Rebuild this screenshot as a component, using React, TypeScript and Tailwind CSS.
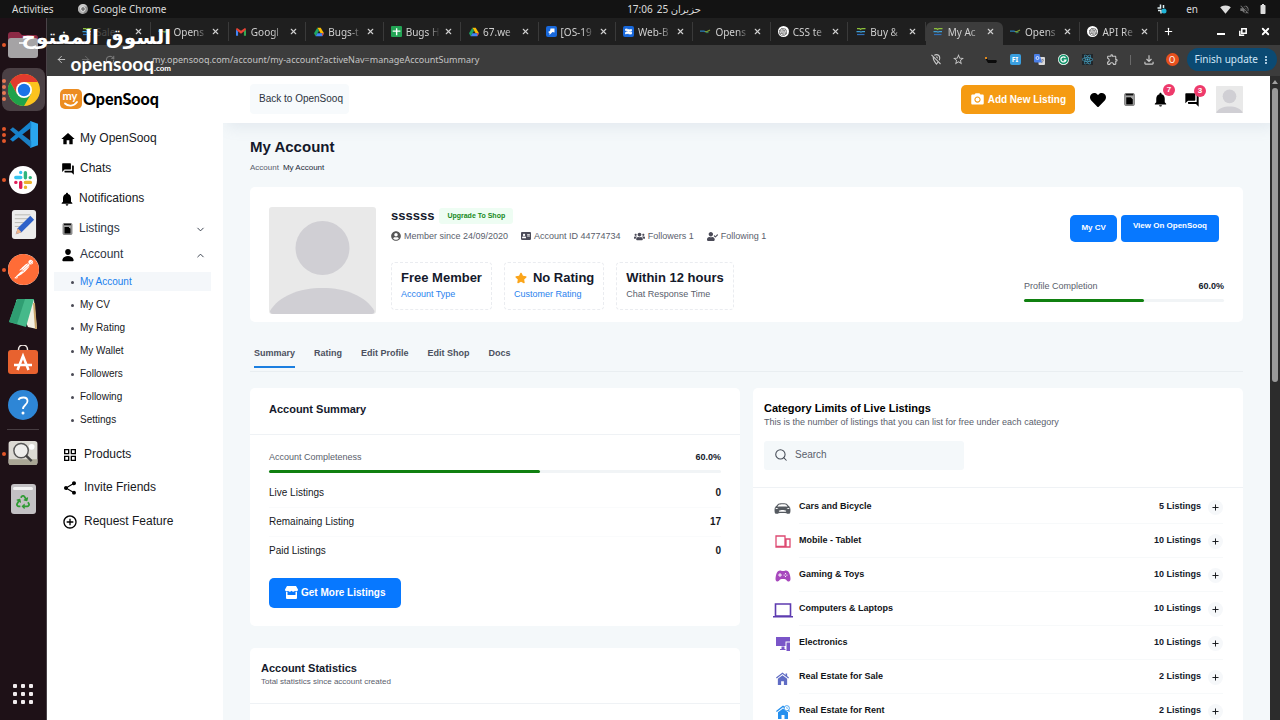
import type { ReactNode } from "react";
import {
  MdHome,
  MdForum,
  MdNotifications,
  MdGridView,
  MdShare,
  MdAddCircleOutline,
  MdOutlineFileDownload,
  MdOutlineLocationOff,
  MdStarBorder,
  MdOutlineExtension,
  MdSignalWifi4Bar,
  MdVolumeOff,
  MdBatteryFull,
  MdCameraAlt,
  MdMoreVert,
} from "react-icons/md";
import { FaStar, FaUsers, FaUserCheck, FaAddressCard, FaHeart, FaUserCircle, FaReact, FaRecycle } from "react-icons/fa";
import { SiPostman, SiOpenai } from "react-icons/si";
import { IoPerson, IoCarSport, IoGameController } from "react-icons/io5";
import { ArrowLeft, ArrowRight, RotateCw, ChevronDown, ChevronUp, Plus, Search, X } from "lucide-react";

/* ---------- Logos ---------- */

function ChromeLogo({ className, mono = false }: { className: string; mono?: boolean }) {
  const [r, y, g, b] = mono ? ["#c9c9c9", "#8f8f8f", "#b0b0b0", "#777"] : ["#e33b2e", "#fcc31e", "#1fa24a", "#1a73e8"];
  return (
    <svg viewBox="0 0 48 48" className={className} aria-hidden="true">
      <circle cx="24" cy="24" r="24" fill={y} />
      <path d="M24 12h20.800A24 24 0 0 0 3.200 12l10.400 18z" fill={r} />
      <path d="M3.200 12A24 24 0 0 0 24 48l10.400-18-20.800 0z" fill={g} />
      <circle cx="24" cy="24" r="12" fill="#fff" />
      <circle cx="24" cy="24" r="9.300" fill={b} />
    </svg>
  );
}

function DriveLogo() {
  return (
    <svg viewBox="0 0 24 22" className="h-[10px] w-[10px]" aria-hidden="true">
      <path d="M8 1h8l8 13h-8z" fill="#fbbc04" />
      <path d="M8 1 0 14l4 7 8-13z" fill="#1fa463" />
      <path d="M8 14h16l-4 7H4z" fill="#4285f4" />
      <path d="m19 14 5 0-4 7z" fill="#ea4335" />
    </svg>
  );
}

function GmailLogo() {
  return (
    <svg viewBox="0 0 24 18" className="h-[8px] w-[10px]" aria-hidden="true">
      <path d="M0 3v15h5V7z" fill="#4285f4" />
      <path d="M24 3v15h-5V7z" fill="#34a853" />
      <path d="M0 3c0-3 3-4 5-2l7 5 7-5c2-2 5-1 5 2l-5 5-7 5-7-5z" fill="#ea4335" />
    </svg>
  );
}

function SheetsLogo() {
  return (
    <svg viewBox="0 0 20 20" className="h-[11px] w-[11px]" aria-hidden="true">
      <rect width="20" height="20" rx="2" fill="#23a455" />
      <path d="M9 4h2.500v4H17v2.500h-5.500V17H9v-6.500H3V8h6z" fill="#fff" />
    </svg>
  );
}

function JiraLogo() {
  return (
    <svg viewBox="0 0 22 22" className="h-[11px] w-[11px]" aria-hidden="true">
      <rect width="22" height="22" rx="4" fill="#1868db" />
      <path d="M9 5h8v8l-4-1-3 3-3 3 0-4-3-2 4-2z" fill="#fff" />
    </svg>
  );
}

function ConfluenceLogo() {
  return (
    <svg viewBox="0 0 22 22" className="h-[11px] w-[11px]" aria-hidden="true">
      <rect width="22" height="22" rx="4" fill="#1868db" />
      <path d="M5 6c4-1 5 3 12 1v3c-7 2-8-2-12-1zM5 13c4-4 7 1 12-1v4c-5 1-8-3-12 0zM9 9l5 5" fill="#fff" stroke="#fff" strokeWidth="1.500" />
    </svg>
  );
}

function SooqMark() {
  return (
    <svg viewBox="0 0 20 18" className="h-[9px] w-[10px]" fill="none" strokeWidth="2.500" aria-hidden="true">
      <path d="M2 3h5l2 2 3-2h7" stroke="#8bbf3a" />
      <path d="M1 9h6l3 1 3-1h5" stroke="#3f9fd8" />
      <path d="M2 15h15" stroke="#2f6fb8" />
    </svg>
  );
}

function SooqLine() {
  return (
    <svg viewBox="0 0 22 10" className="h-[5px] w-[11px]" fill="none" strokeWidth="2.500" aria-hidden="true">
      <path d="M0 4h8l3 2" stroke="#2a7fb5" />
      <path d="M10 5h4l6-3" stroke="#7c9a35" />
      <path d="M12 7h5" stroke="#357a55" />
    </svg>
  );
}

function OpenAiTab() {
  return (
    <span className="flex size-[11px] items-center justify-center rounded-full bg-white text-[#333]">
      <SiOpenai size={8} />
    </span>
  );
}

function ListingIcon({ className }: { className: string }) {
  return (
    <svg viewBox="0 0 20 24" className={className} aria-hidden="true">
      <rect x="1" y="1" width="18" height="22" rx="2" fill="#a3a3a3" stroke="#6d6d6d" strokeWidth="1.500" />
      <path d="M3 3h14" stroke="#111" strokeWidth="3" />
      <rect x="4" y="8" width="12" height="13" fill="#000" />
      <path d="M12.500 8H16v3.500z" fill="#ddd" />
    </svg>
  );
}

function AvatarArt({ className }: { className: string }) {
  return (
    <svg viewBox="0 0 107 107" className={className} role="img" aria-label="Profile picture">
      <rect width="107" height="107" rx="3" fill="#e9e9e9" />
      <circle cx="53.500" cy="41" r="27" fill="#d0cfd4" />
      <path d="M1 104C10 89 30 81 53.500 81s43 8 52 23c0 2-1 3-3 3H4c-2 0-3-1-3-3z" fill="#d0cfd4" />
    </svg>
  );
}

/* ---------- Dock ---------- */

const FilesIcon = (
  <svg viewBox="0 0 30 30" className="size-[30px]">
    <path d="M0 5a3 3 0 0 1 3-3h8l3 3h13a3 3 0 0 1 3 3v4H0z" fill="#8c2a45" />
    <rect y="8" width="30" height="20" rx="3" fill="#a5a3a5" />
    <path d="M11 13h8" stroke="#e8e8e8" strokeWidth="2" />
  </svg>
);

const CodeIcon = (
  <svg viewBox="0 0 30 30" className="size-[29px]">
    <path d="M22 1 30 4v22l-8 3z" fill="#2aa6ee" />
    <path d="M1 10 4 7.500 23 22v7z" fill="#1b7fc4" />
    <path d="M1 20 4 22.500 23 8V1z" fill="#1583ce" />
  </svg>
);

const SlackIcon = (
  <svg viewBox="0 0 28 28" className="size-[28px]">
    <circle cx="14" cy="14" r="14" fill="#fff" />
    <g strokeWidth="3.400" strokeLinecap="round">
      <path d="M6.800 11.500h5M11.700 6.500v.1" stroke="#36c5f0" />
      <path d="M16.400 6.800v5M21.200 11.600h.1" stroke="#2eb67d" />
      <path d="M16.400 16.400h5M16.500 21.300v.1" stroke="#ecb22e" />
      <path d="M11.700 16.400v5M6.800 16.400h.1" stroke="#e01e5a" />
    </g>
  </svg>
);

const EditorIcon = (
  <svg viewBox="0 0 30 32" className="h-[31px] w-[29px]">
    <rect x="3" y="1" width="25" height="30" rx="3" fill="#ececec" />
    <path d="M6 6h16M6 10h16M6 14h12M6 18h9" stroke="#b9b9b2" />
    <path d="m7 26 2-6L22 7l4 4-13 13z" fill="#2f62c9" />
    <path d="m7 26 2-6 4 4z" fill="#f0b488" />
  </svg>
);

const PostmanIcon = (
  <span className="flex size-[31px] items-center justify-center rounded-full bg-white text-[#ff6c37]">
    <SiPostman size={31} />
  </span>
);

const BookIcon = (
  <svg viewBox="0 0 30 32" className="h-[32px] w-[30px]">
    <path d="M8 1h18l3 29-9-2z" fill="#f3efe2" />
    <path d="m26 4 2 26" stroke="#c9a469" strokeWidth="2" />
    <path d="M9 0h17l-8 28L1 23z" fill="#46b98a" />
    <path d="M9 0h8l-8 25-8-2z" fill="#2f9e72" />
  </svg>
);

const StoreIcon = (
  <svg viewBox="0 0 30 30" className="size-[30px]" fill="none">
    <path d="M10.500 6V4.500a4.500 4.500 0 0 1 9 0V6" stroke="#f1e9e4" strokeWidth="1.500" />
    <rect y="5" width="30" height="24" rx="3" fill="#e8622f" />
    <path d="m9.500 25 5.500-14 5.500 14M6 20h18" stroke="#fff" strokeWidth="2.500" />
  </svg>
);

const HelpIcon = (
  <svg viewBox="0 0 30 30" className="size-[30px]" fill="none">
    <circle cx="15" cy="15" r="15" fill="#2e86d6" />
    <path d="M10.500 10c1-3 9-4 9 1 0 4-4.500 4-4.500 8" stroke="#fff" strokeWidth="1.800" />
    <circle cx="15" cy="23" r="1.500" fill="#fff" />
  </svg>
);

const ViewerIcon = (
  <svg viewBox="0 0 30 26" className="h-[25px] w-[30px]" fill="none">
    <rect width="30" height="25" rx="3" fill="#dcdad4" />
    <path d="M0 19h30v3a3 3 0 0 1-3 3H3a3 3 0 0 1-3-3z" fill="#a9a695" />
    <circle cx="24" cy="6" r="3" fill="#fff" />
    <circle cx="13" cy="10" r="7.500" fill="#eeeeec" stroke="#555" strokeWidth="1.500" />
    <path d="m18 15 6 6" stroke="#444" strokeWidth="2.500" />
  </svg>
);

const TrashIcon = (
  <span className="flex h-[30px] w-[25px] flex-col items-center rounded-[3px] bg-[#c3c1c4] pt-[3px]">
    <span className="h-[3px] w-[20px] rounded-sm bg-[#f3f3f3]" />
    <FaRecycle size={14} className="mt-[5px] text-[#2f9b34]" />
  </span>
);

const dockApps: { name: string; dots: number; icon: ReactNode; active?: boolean }[] = [
  { name: "Files", dots: 1, icon: FilesIcon },
  { name: "Google Chrome", dots: 4, icon: <ChromeLogo className="size-[32px]" />, active: true },
  { name: "Code", dots: 3, icon: CodeIcon },
  { name: "Slack", dots: 1, icon: SlackIcon },
  { name: "Text Editor", dots: 0, icon: EditorIcon },
  { name: "Postman", dots: 1, icon: PostmanIcon },
  { name: "Notes", dots: 0, icon: BookIcon },
  { name: "Software", dots: 0, icon: StoreIcon },
  { name: "Help", dots: 0, icon: HelpIcon },
];

function DockItem({ name, dots, icon, active }: { name: string; dots: number; icon: ReactNode; active?: boolean }) {
  return (
    <button type="button" aria-label={name} className="flex h-[45px] w-full items-center">
      <span className="flex w-[6px] flex-col items-end gap-[2px]">
        {Array.from({ length: dots }, (_, i) => (
          <span key={i} className="size-[4px] rounded-full bg-[#e2572a]" />
        ))}
      </span>
      <span
        className={
          active
            ? "-ml-[4px] flex h-[43px] w-[43px] items-center justify-center rounded-lg bg-white/20"
            : "ml-px flex w-[32px] items-center justify-center"
        }
      >
        {icon}
      </span>
    </button>
  );
}

function Dock() {
  return (
    <nav aria-label="Dock" className="flex w-[47px] shrink-0 flex-col border-r border-[#4a4348] bg-[#1e1117] pt-[4px]">
      {dockApps.map((app) => (
        <DockItem key={app.name} {...app} />
      ))}
      <div className="mx-[7px] mt-[2px] mb-px h-px bg-[#473d42]" />
      <DockItem name="Image Viewer" dots={1} icon={ViewerIcon} />
      <DockItem name="Trash" dots={0} icon={TrashIcon} />
      <button type="button" aria-label="Show Applications" className="mx-auto mt-auto mb-[16px] grid grid-cols-3 gap-[4px]">
        {Array.from({ length: 9 }, (_, i) => (
          <span key={i} className="size-[4px] rounded-[1px] bg-[#f1ecee]" />
        ))}
      </button>
    </nav>
  );
}

/* ---------- Browser chrome ---------- */

const tabs: { title: string; icon: ReactNode; active?: boolean; dim?: boolean }[] = [
  { title: "Sale,", icon: <SooqMark />, dim: true },
  { title: "Opens", icon: <SooqLine /> },
  { title: "Googl", icon: <GmailLogo /> },
  { title: "Bugs-t", icon: <DriveLogo /> },
  { title: "Bugs H", icon: <SheetsLogo /> },
  { title: "67.we", icon: <DriveLogo /> },
  { title: "[OS-19", icon: <JiraLogo /> },
  { title: "Web-B", icon: <ConfluenceLogo /> },
  { title: "Opens", icon: <SooqLine /> },
  { title: "CSS te", icon: <OpenAiTab /> },
  { title: "Buy &", icon: <SooqMark /> },
  { title: "My Ac", icon: <SooqMark />, active: true },
  { title: "Opens", icon: <SooqLine /> },
  { title: "API Re", icon: <OpenAiTab /> },
];

function TabStrip() {
  return (
    <div className="flex h-[27px] items-center bg-[#1f1f1f] pl-[27px] text-[#d0d0d0]">
      <div className="flex h-full min-w-0 flex-1">
        {tabs.map((tab, i) => (
          <div key={i} className={tab.active ? "flex min-w-0 flex-1 pt-[4px]" : "flex min-w-0 flex-1 py-[4px]"}>
            <div
              className={
                tab.active
                  ? "flex w-full items-center rounded-t-md bg-[#3c3c3c] pb-[4px] pl-[7px]"
                  : "flex w-full items-center border-r border-[#3a3a3a] pl-[7px]"
              }
            >
              <span className="flex w-[11px] shrink-0 items-center justify-center">{tab.icon}</span>
              <span
                className={
                  tab.dim
                    ? "ml-[4px] w-[34px] text-[10px] leading-4 whitespace-nowrap text-[#4a4a4a]"
                    : "ml-[4px] w-[34px] text-[10px] leading-4 whitespace-nowrap [mask-image:linear-gradient(to_right,black_65%,transparent)]"
                }
              >
                {tab.title}
              </span>
              <button type="button" aria-label="Close tab" className="ml-[4px]">
                <X size={9} strokeWidth={3} />
              </button>
            </div>
          </div>
        ))}
      </div>
      <div className="flex w-[122px] shrink-0 items-center pl-[5px] text-white">
        <button type="button" aria-label="New tab">
          <Plus size={11} strokeWidth={2.5} />
        </button>
        <button type="button" aria-label="Minimize" className="ml-[43px] h-[7px] w-[8px] border-b-2 border-white" />
        <button type="button" aria-label="Restore" className="ml-[14px]">
          <svg viewBox="0 0 8 8" className="size-[8px]" fill="none" stroke="#fff" strokeWidth="1.500">
            <path d="M2.800.8h4.400v4.400H2.800zM.8 2.800v4.400h4.400" />
          </svg>
        </button>
        <button type="button" aria-label="Close window" className="ml-[13px]">
          <X size={11} strokeWidth={4} />
        </button>
      </div>
    </div>
  );
}

function Toolbar() {
  return (
    <div className="flex h-[31px] items-center bg-[#3c3c3c] pb-[2px] text-[#c8c8c8]">
      <button type="button" aria-label="Back" className="ml-[9px]">
        <ArrowLeft size={11} />
      </button>
      <button type="button" aria-label="Forward" className="ml-[13px] text-[#6d6d6d]">
        <ArrowRight size={11} />
      </button>
      <button type="button" aria-label="Reload" className="ml-[14px] text-[#8d8d8d]">
        <RotateCw size={10} />
      </button>
      <input
        aria-label="Address"
        defaultValue="my.opensooq.com/account/my-account?activeNav=manageAccountSummary"
        className="ml-[37px] min-w-0 flex-1 bg-transparent text-[9px] leading-4 text-[#c4c4c4] outline-none"
      />
      <div className="flex items-center">
        <MdOutlineLocationOff size={13} />
        <MdStarBorder size={13} className="ml-[9px]" />
        <svg viewBox="0 0 12 8" className="ml-[20px] h-[8px] w-[12px]">
          <path d="M0 2h2l1 2h8l1 1-1 2H3z" fill="#0b0b0b" />
          <path d="M0 1h2v2H0z" fill="#e08a1e" />
        </svg>
        <span className="ml-[13px] flex size-[11px] items-center justify-center rounded-[2px] bg-[#3a9fe0] text-[7px] leading-none font-bold text-white">
          FI
        </span>
        <svg viewBox="0 0 22 22" className="ml-[13px] size-[11px]">
          <rect x="9" y="6" width="13" height="16" rx="2" fill="#dadada" />
          <path d="M2 0h9l5 17H2a2 2 0 0 1-2-2V2a2 2 0 0 1 2-2z" fill="#4a7fe8" />
          <circle cx="7" cy="8" r="3" fill="none" stroke="#fff" strokeWidth="1.500" />
          <path d="M14 12h6M17 10v2m2 1-4 5" stroke="#667" strokeWidth="1.200" />
        </svg>
        <svg viewBox="0 0 22 22" className="ml-[13px] size-[11px]" fill="none">
          <circle cx="11" cy="11" r="11" fill="#f2fbf7" />
          <circle cx="11" cy="11" r="9.500" fill="#14936b" />
          <path d="M15 7.500A5.200 5.200 0 1 0 16 12h-4.500" stroke="#fff" strokeWidth="2.500" />
        </svg>
        <span className="ml-[13px] flex size-[11px] items-center justify-center bg-[#20262b] text-[#4cb4d8]">
          <FaReact size={11} />
        </span>
        <MdOutlineExtension size={13} className="ml-[13px]" />
        <span className="ml-[11px] h-[10px] w-px bg-[#6a6a6a]" />
        <MdOutlineFileDownload size={14} className="ml-[11px]" />
        <span className="ml-[10px] flex size-[13px] items-center justify-center rounded-full bg-[#e8501d] text-[8px] leading-none text-white">O</span>
        <button type="button" className="mr-[3px] ml-[8px] flex h-[23px] items-center rounded-full bg-[#0b4a73] pr-[5px] pl-[8px] text-[10px] text-[#cfe6f7]">
          Finish update
          <MdMoreVert size={12} className="ml-[2px]" />
        </button>
      </div>
    </div>
  );
}

function SystemBar() {
  return (
    <div className="grid h-[18px] shrink-0 grid-cols-3 items-center bg-[#131313] text-[10px] leading-4 text-[#dcdcdc]">
      <div className="flex items-center pl-[12px]">
        <span>Activities</span>
        <ChromeLogo mono className="ml-[24px] size-[10px]" />
        <span className="ml-[5px]">Google Chrome</span>
      </div>
      <div className="flex items-center justify-center gap-[4px] pl-[48px]">
        <span>17:06</span>
        <span>25 حزيران</span>
      </div>
      <div className="flex items-center justify-end pr-[11px]">
        <svg viewBox="0 0 20 20" className="size-[10px]" fill="none" stroke="#dfeef2" strokeWidth="3">
          <path d="M7 1v7H1M13 2v6M2 13h6v6" />
          <circle cx="14" cy="14" r="5" fill="#1fb4d8" stroke="none" />
        </svg>
        <span className="ml-[19px]">en</span>
        <MdSignalWifi4Bar size={11} className="ml-[22px]" />
        <MdVolumeOff size={11} className="ml-[8px] text-[#777]" />
        <MdBatteryFull size={12} className="ml-[7px]" />
      </div>
    </div>
  );
}

/* ---------- Site ---------- */

const subItems = ["My Account", "My CV", "My Rating", "My Wallet", "Followers", "Following", "Settings"];

function NavLink({ icon, label, className, end }: { icon: ReactNode; label: string; className: string; end?: ReactNode }) {
  return (
    <a href="#" className={`flex items-center text-[12px] leading-4 ${className}`}>
      <span className="mt-[2px]">{icon}</span>
      <span className="flex-1">{label}</span>
      {end}
    </a>
  );
}

function Sidebar() {
  return (
    <aside className="w-[176px] shrink-0 bg-white pt-[13px] pl-[7px] text-[#16181c]">
      <a href="#" className="mb-[14px] ml-[6px] flex h-[20px] items-center" aria-label="My OpenSooq">
        <svg viewBox="0 0 22 20" className="h-[20px] w-[22px]" fill="none">
          <rect width="22" height="20" rx="5" fill="#ec8d22" />
          <path d="M5 14.500c3 3 9 3 12-1.500" stroke="#fff" strokeWidth="1.800" strokeLinecap="round" />
          <text x="2.500" y="11" fontSize="11" fontWeight="700" fontFamily="Lato, sans-serif" fill="#fff">
            my
          </text>
        </svg>
        <span className="ml-px font-['Lato',sans-serif] text-[16px] leading-5 font-black text-black">OpenSooq</span>
      </a>
      <nav aria-label="Site">
        <NavLink className="h-[30px] pl-[6px]" label="My OpenSooq" icon={<MdHome size={16} className="mr-[4px] text-black" />} />
        <NavLink className="h-[30px] pl-[7px]" label="Chats" icon={<MdForum size={14} className="mr-[5px] text-black" />} />
        <NavLink className="h-[30px] pl-[5px]" label="Notifications" icon={<MdNotifications size={16} className="mr-[4px] text-black" />} />
        <NavLink
          className="h-[30px] pr-[17px] pl-[8px] text-[#2d3443]"
          label="Listings"
          icon={<ListingIcon className="mr-[6px] h-[12px] w-[11px]" />}
          end={<ChevronDown size={11} className="mt-[2px]" />}
        />
        <NavLink
          className="h-[22px] pr-[17px] pl-[7px] text-[#2d3443]"
          label="Account"
          icon={<IoPerson size={14} className="mr-[5px] text-black" />}
          end={<ChevronUp size={11} className="mt-[2px]" />}
        />
        <ul className="mt-[5px] mr-[12px] text-[10px] leading-[15px]">
          {subItems.map((item, i) => (
            <li key={item} className="flex h-[23px] items-center">
              <a href="#" className={i === 0 ? "flex w-full items-center bg-[#f4f7fa] py-[2px] pl-[17px] text-[#1b7fee]" : "flex w-full items-center py-[2px] pl-[17px]"}>
                <span className="mt-[2px] mr-[6px] size-[3px] rounded-full bg-[#4a4a55]" />
                {item}
              </a>
            </li>
          ))}
        </ul>
        <div className="mt-[6px]">
          <NavLink className="h-[33px] pl-[8px]" label="Products" icon={<MdGridView size={16} className="mr-[6px] text-black" />} />
          <NavLink className="h-[34px] pl-[8px]" label="Invite Friends" icon={<MdShare size={16} className="mr-[6px] text-black" />} />
          <NavLink className="h-[33px] pl-[8px]" label="Request Feature" icon={<MdAddCircleOutline size={16} className="mr-[6px] text-black" />} />
        </div>
      </nav>
    </aside>
  );
}

function IconWithBadge({ label, icon, count }: { label: string; icon: ReactNode; count: number }) {
  return (
    <button type="button" aria-label={label} className="relative">
      {icon}
      <span className="absolute -top-[7px] -right-[6px] flex size-[12px] items-center justify-center rounded-full bg-[#ee3a6b] text-[8px] leading-none font-bold text-white">
        {count}
      </span>
    </button>
  );
}

function SiteHeader() {
  return (
    <header className="relative flex h-[47px] shrink-0 items-center bg-white pr-[27px] pl-[27px] shadow-[4px_4px_14px_rgba(120,140,170,0.14)]">
      <a href="#" className="-mt-[2px] rounded bg-[#f7fafc] py-[8px] pr-[6px] pl-[9px] text-[10px] leading-[14px] text-[#2b3340]">
        Back to OpenSooq
      </a>
      <div className="ml-auto flex items-center text-black">
        <button type="button" className="flex h-[29px] items-center rounded-[5px] bg-[#f59b12] px-[9px] text-[10px] font-bold text-white">
          <MdCameraAlt size={15} className="mr-[3px]" />
          Add New Listing
        </button>
        <button type="button" aria-label="Favourites" className="ml-[15px]">
          <FaHeart size={16} />
        </button>
        <button type="button" aria-label="My listings" className="ml-[18px]">
          <ListingIcon className="h-[13px] w-[11px]" />
        </button>
        <span className="ml-[17px] flex">
          <IconWithBadge label="Notifications" count={7} icon={<MdNotifications size={17} />} />
        </span>
        <span className="ml-[15px] flex">
          <IconWithBadge label="Chats" count={3} icon={<MdForum size={16} />} />
        </span>
        <AvatarArt className="ml-[16px] size-[27px]" />
      </div>
    </header>
  );
}

function Progress({ label }: { label: string }) {
  return (
    <div>
      <div className="flex justify-between text-[9px] leading-[14px]">
        <span className="text-[#5a606c]">{label}</span>
        <span className="font-bold text-[#14192b]">60.0%</span>
      </div>
      <div className="mt-[6px] h-[3px] rounded-full bg-[#f1f4f6]">
        <div className="h-full w-3/5 rounded-full bg-[#108010]" />
      </div>
    </div>
  );
}

function StatBox({ title, caption, linked, star }: { title: string; caption: string; linked?: boolean; star?: boolean }) {
  return (
    <div className="rounded-[4px] border border-dashed border-[#eaecf0] px-[9px] pt-[6px] pb-[8px]">
      <div className="flex items-center text-[13px] leading-[18px] font-bold text-[#14192b]">
        {star && <FaStar size={12} className="mr-[6px] ml-[1px] text-[#fba51a]" />}
        {title}
      </div>
      {linked ? (
        <a href="#" className="block text-[9px] leading-[14px] text-[#2a82ee]">{caption}</a>
      ) : (
        <div className="text-[9px] leading-[14px] text-[#5a606c]">{caption}</div>
      )}
    </div>
  );
}

function ProfileCard() {
  return (
    <section className="mt-[13px] flex rounded-[5px] bg-white pt-[20px] pr-[19px] pb-[8px] pl-[19px]">
      <AvatarArt className="size-[107px] shrink-0" />
      <div className="ml-[15px] flex-1">
        <div className="flex items-center">
          <h2 className="text-[13px] leading-[18px] font-bold text-[#14192b]">ssssss</h2>
          <a href="#" className="ml-[5px] rounded-[3px] bg-[#eefdf3] px-[8px] text-[7px] leading-[16px] font-bold text-[#178a1c]">
            Upgrade To Shop
          </a>
        </div>
        <div className="mt-[4px] flex items-center gap-[13px] text-[9px] leading-[14px] text-[#5a606c]">
          <span className="flex items-center gap-[3px]">
            <FaUserCircle size={10} className="text-[#555]" />
            Member since 24/09/2020
          </span>
          <span className="flex items-center gap-[3px]">
            <FaAddressCard size={10} className="text-[#4b4b58]" />
            Account ID 44774734
          </span>
          <span className="flex items-center gap-[3px]">
            <FaUsers size={11} className="text-[#4b4b58]" />
            Followers 1
          </span>
          <span className="flex items-center gap-[3px]">
            <FaUserCheck size={11} className="text-[#4b4b58]" />
            Following 1
          </span>
        </div>
        <div className="mt-[19px] flex gap-[12px]">
          <StatBox title="Free Member" caption="Account Type" linked />
          <StatBox title="No Rating" caption="Customer Rating" linked star />
          <StatBox title="Within 12 hours" caption="Chat Response Time" />
        </div>
      </div>
      <div className="w-[200px] pt-[8px]">
        <div className="flex justify-end gap-[4px] pr-[5px] text-[8px] font-bold text-white">
          <a href="#" className="rounded-[5px] bg-[#0778ff] px-[11px] pt-[7px] pb-[8px] leading-[12px]">My CV</a>
          <a href="#" className="rounded-[4px] bg-[#0778ff] px-[12px] pt-[5px] pb-[10px] leading-[12px]">View On OpenSooq</a>
        </div>
        <div className="mt-[37px]">
          <Progress label="Profile Completion" />
        </div>
      </div>
    </section>
  );
}

const summaryRows = [
  ["Live Listings", "0"],
  ["Remainaing Listing", "17"],
  ["Paid Listings", "0"],
];

function AccountSummary() {
  return (
    <section className="rounded-[5px] bg-white pb-[18px]">
      <h2 className="border-b border-[#eff2f5] pt-[13px] pb-[17px] pl-[19px] text-[11px] leading-4 font-bold text-[#14192b]">Account Summary</h2>
      <div className="px-[19px] pt-[15px]">
        <Progress label="Account Completeness" />
        <dl className="mt-[6px] text-[10px] leading-[14px] text-[#16181c]">
          {summaryRows.map(([name, value]) => (
            <div key={name} className="flex h-[29px] items-center justify-between border-b border-[#fafbfc] last:border-transparent">
              <dt>{name}</dt>
              <dd className="font-bold">{value}</dd>
            </div>
          ))}
        </dl>
        <button type="button" className="mt-[12px] flex h-[30px] items-center rounded-[5px] bg-[#0778ff] px-[16px] pb-[2px] text-[10px] font-bold text-white">
          <svg viewBox="0 0 13 13" className="mr-[3px] size-[13px]" fill="#fff" aria-hidden="true">
            <path d="M2 0h9l2 3.500c0 2-2 2.500-3 1.300-1 1.200-2.500 1.200-3.500 0-1 1.200-2.500 1.200-3.500 0C2 6 0 5.500 0 3.500z" />
            <path d="M1 6h1.500v3h8V6H12v6a1 1 0 0 1-1 1H2a1 1 0 0 1-1-1z" />
          </svg>
          Get More Listings
        </button>
      </div>
    </section>
  );
}

function AccountStatistics() {
  return (
    <section className="rounded-[5px] bg-white pb-[60px]">
      <div className="border-b border-[#eff2f5] pt-[13px] pb-[14px] pl-[11px]">
        <h2 className="text-[11px] leading-[14px] font-bold text-[#14192b]">Account Statistics</h2>
        <p className="text-[8px] leading-[14px] text-[#5a606c]">Total statistics since account created</p>
      </div>
    </section>
  );
}

function HouseIcon({ className, clock = false }: { className: string; clock?: boolean }) {
  return (
    <svg viewBox="0 0 14 14" className={className} fill="currentColor" aria-hidden="true">
      <path d="M7 .5 0 6l.8 1L7 2.200 13.200 7l.8-1-2-1.600V1.500h-1.700v1.600z" />
      <path d="M7 3.500 2 7.300V14h3.500v-4h3v4H12V7.300z" />
      {clock && <circle cx="10.800" cy="3.200" r="2.600" fill="#fff" stroke="currentColor" strokeWidth=".8" />}
      {clock && <path d="M10.800 2v1.400h1" fill="none" stroke="currentColor" strokeWidth=".6" />}
    </svg>
  );
}

const categories: { name: string; count: number; icon: ReactNode }[] = [
  { name: "Cars and Bicycle", count: 5, icon: <IoCarSport size={17} className="text-[#555a60]" /> },
  {
    name: "Mobile - Tablet",
    count: 10,
    icon: (
      <svg viewBox="0 0 16 14" className="h-[14px] w-[16px]" fill="none" stroke="#dd4a72" strokeWidth="1.300">
        <path d="M1 1h9v11H1zM11 4h4v8h-4zM1 11.500h9" />
      </svg>
    ),
  },
  { name: "Gaming & Toys", count: 10, icon: <IoGameController size={16} className="text-[#a748bd]" /> },
  {
    name: "Computers & Laptops",
    count: 10,
    icon: (
      <svg viewBox="0 0 20 15" className="h-[15px] w-[20px]" fill="none" stroke="#5d3bb0" strokeWidth="1.600">
        <path d="M2.500 1h15v12h-15zM0 13.700h20" />
      </svg>
    ),
  },
  {
    name: "Electronics",
    count: 10,
    icon: (
      <svg viewBox="0 0 14 14" className="size-[14px]" fill="#7a55c8">
        <path d="M0 0h14v4.500H9.500V9H0zM10.500 5.500H14V14h-3.500zM5.500 9.500h3v2.500h1V13H4v-1h1.500z" />
      </svg>
    ),
  },
  { name: "Real Estate for Sale", count: 2, icon: <HouseIcon className="size-[13px] text-[#5f6cc4]" /> },
  { name: "Real Estate for Rent", count: 2, icon: <HouseIcon clock className="size-[14px] text-[#2590ee]" /> },
];

function CategoryLimits() {
  return (
    <section className="rounded-[5px] bg-white">
      <div className="border-b border-[#eff2f5] pt-[13px] pb-[17px] pl-[11px]">
        <h2 className="text-[11px] leading-[14px] font-bold text-black">Category Limits of Live Listings</h2>
        <p className="text-[9px] leading-[14px] text-[#5a606c]">This is the number of listings that you can list for free under each category</p>
        <label className="mt-[12px] flex h-[29px] w-[200px] items-center rounded-[3px] bg-[#f4f8fa] pb-[2px] pl-[10px]">
          <Search size={14} strokeWidth={1.8} className="mr-[7px] text-[#444a55]" />
          <input
            type="search"
            aria-label="Search"
            placeholder="Search"
            className="min-w-0 flex-1 bg-transparent text-[10px] leading-[14px] outline-none placeholder:text-[#5a606c]"
          />
        </label>
      </div>
      <ul className="pt-[2px] pr-[20px] pl-[19px] text-[9px] font-bold text-[#111318]">
        {categories.map((c) => (
          <li key={c.name} className="flex h-[34px] items-center">
            <span className="mt-[2px] mr-[6px] flex w-[21px] shrink-0 justify-center">{c.icon}</span>
            <span className="flex h-full flex-1 items-center border-b border-[#f7f9fa]">
              <span className="flex-1">{c.name}</span>
              <span className="text-[#14192b]">{c.count} Listings</span>
              <button type="button" aria-label={`Expand ${c.name}`} className="mt-[2px] ml-[7px] flex size-[15px] items-center justify-center rounded-full bg-[#f6f8fa]">
                <Plus size={9} strokeWidth={2.5} />
              </button>
            </span>
          </li>
        ))}
      </ul>
    </section>
  );
}

function SitePage() {
  const pageTabs = ["Summary", "Rating", "Edit Profile", "Edit Shop", "Docs"];
  return (
    <div className="flex min-h-0 flex-1 bg-white font-['Liberation_Sans',Arial,sans-serif]">
      <Sidebar />
      <div className="flex min-w-0 flex-1 flex-col overflow-hidden">
        <SiteHeader />
        <main className="min-h-0 flex-1 overflow-hidden bg-[#f4f8fa] px-[27px] pt-[14px]">
          <h1 className="text-[15px] leading-5 font-bold text-[#14192b]">My Account</h1>
          <nav aria-label="Breadcrumb" className="mt-[5px] flex gap-[4px] text-[8px] leading-[12px]">
            <a href="#" className="text-[#5a606c]">Account</a>
            <span className="text-[#232838]">My Account</span>
          </nav>
          <ProfileCard />
          <nav aria-label="Account sections" className="mt-[24px] flex gap-[19px] border-b border-[#e9eef1] pb-[3px] pl-[4px] text-[9px] leading-[14px] font-bold text-[#4c5160]">
            {pageTabs.map((t, i) => (
              <a key={t} href="#" className={i === 0 ? "border-b-2 border-[#1b7fe0] pb-[6px]" : "border-b-2 border-transparent pb-[6px]"}>
                {t}
              </a>
            ))}
          </nav>
          <div className="mt-[16px] grid grid-cols-2 items-start gap-[13px]">
            <div className="flex flex-col gap-[22px]">
              <AccountSummary />
              <AccountStatistics />
            </div>
            <CategoryLimits />
          </div>
        </main>
      </div>
      <div className="flex w-[10px] shrink-0 flex-col items-center bg-[#2c2c2c] pt-[4px]" aria-hidden="true">
        <span className="border-x-[3px] border-b-[4px] border-x-transparent border-b-[#a0a0a0]" />
        <span className="mt-[4px] h-[46%] w-[6px] rounded-full bg-[#9a9a9a]" />
      </div>
    </div>
  );
}

function Watermark() {
  return (
    <div className="pointer-events-none absolute top-[20px] left-[22px] flex w-[149px] flex-col items-end text-white">
      <span dir="rtl" className="font-['DejaVu_Sans',sans-serif] text-[20px] leading-[34px] font-bold whitespace-nowrap">السوق المفتوح</span>
      <span className="font-['Lato',sans-serif] text-[19px] leading-[20px] font-bold whitespace-nowrap">
        opensooq<span className="text-[8px]">.com</span>
      </span>
    </div>
  );
}

export default function App() {
  return (
    <div className="relative flex h-screen flex-col overflow-hidden bg-[#131313] font-['Noto_Sans','DejaVu_Sans',sans-serif]">
      <SystemBar />
      <div className="flex min-h-0 flex-1">
        <Dock />
        <div className="flex min-w-0 flex-1 flex-col">
          <TabStrip />
          <Toolbar />
          <SitePage />
        </div>
      </div>
      <Watermark />
    </div>
  );
}
